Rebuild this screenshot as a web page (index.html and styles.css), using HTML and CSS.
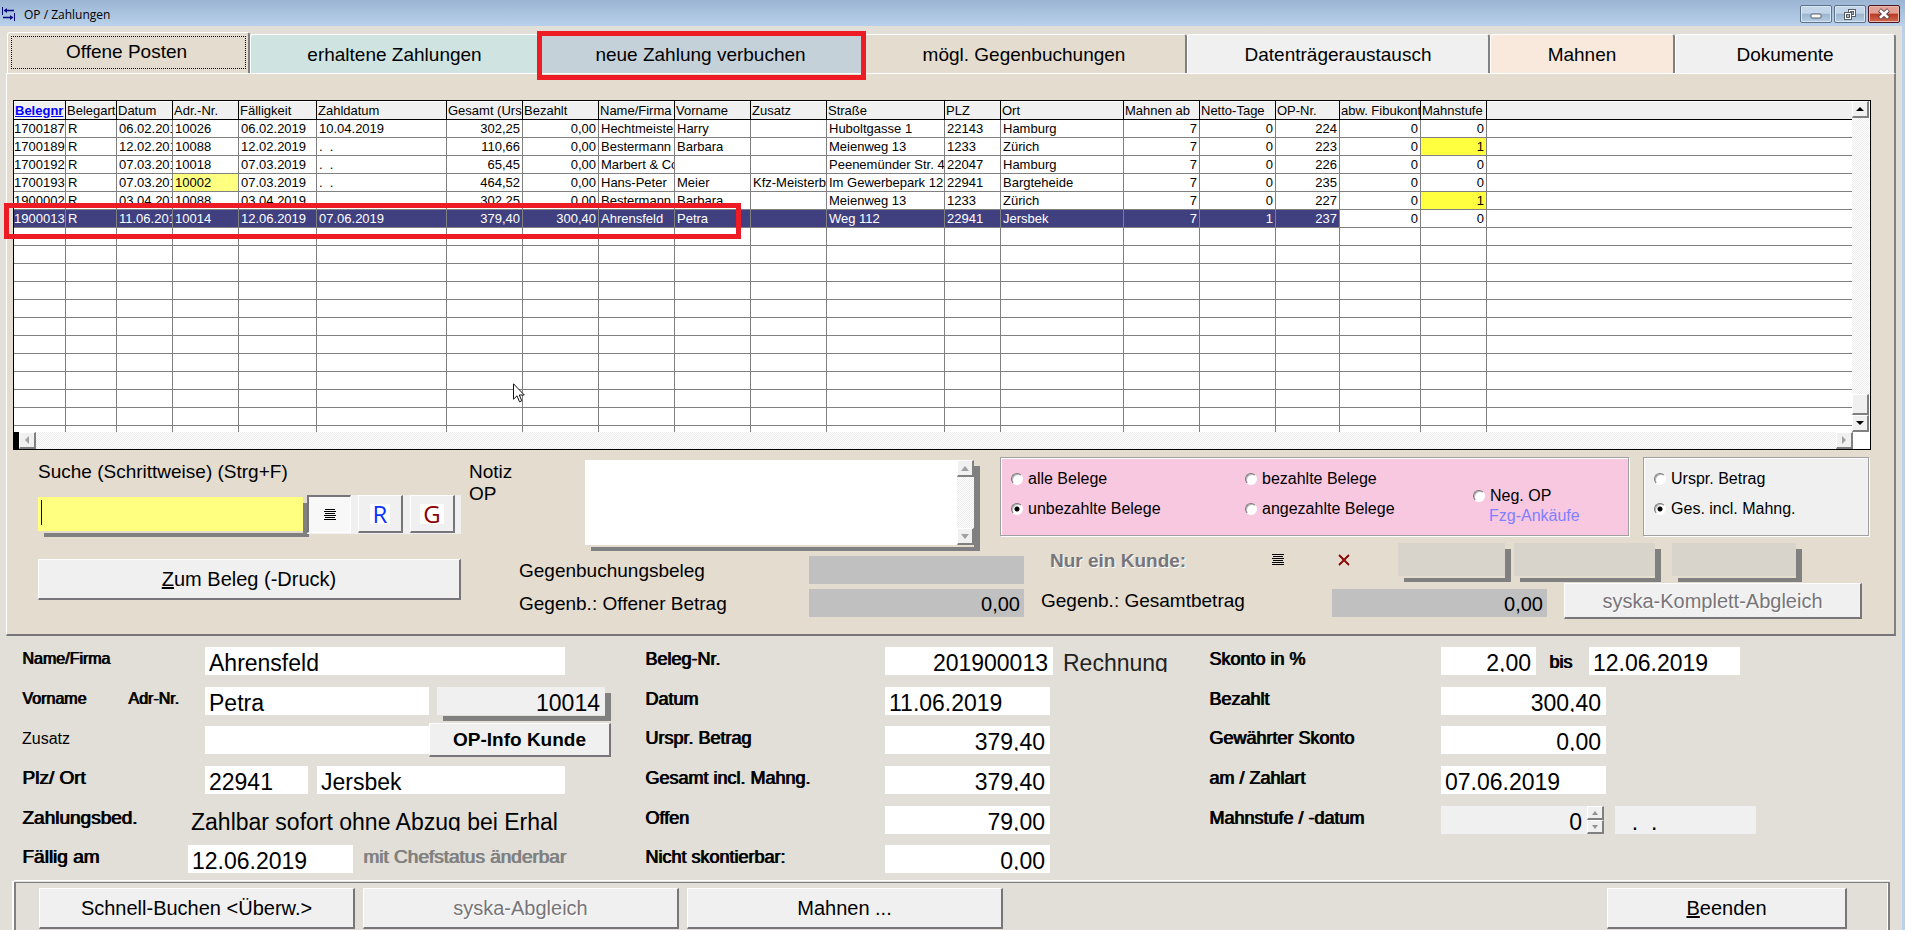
FILE: index.html
```html
<!DOCTYPE html>
<html lang="de">
<head>
<meta charset="utf-8">
<title>OP / Zahlungen</title>
<link rel="stylesheet" href="styles.css">
</head>
<body class="window">
<header class="titlebar">
  <svg class="app-icon" width="13" height="14" viewBox="0 0 13 14" fill="none" stroke="#0a0a80"><path d="M.5 0v8M12.500 6v8" stroke-width="1"/><path d="M2 3.500h10M1 10.500h10" stroke-width="1.500"/><path d="M5 1v5L2 3.500zM8 8v5l3-2.500z" fill="#0a0a80" stroke="none"/></svg>
  <h1 class="title">OP / Zahlungen</h1>
  <div class="win-buttons">
    <button class="win-btn" aria-label="Minimieren"><svg width="12" height="12" viewBox="0 0 12 12"><rect x="1" y="6" width="10" height="4" rx="1" fill="#fff" stroke="#555c68"/></svg></button>
    <button class="win-btn" aria-label="Wiederherstellen"><svg width="14" height="13" viewBox="0 0 14 13" fill="#fff" stroke="#555c68"><rect x="5.500" y="1.500" width="7" height="7"/><rect x="7.500" y="3.500" width="3" height="3" fill="#9db5d0"/><rect x="1.500" y="4.500" width="7" height="7"/><rect x="3.500" y="6.500" width="3" height="3" fill="#9db5d0"/></svg></button>
    <button class="win-btn win-close" aria-label="Schließen"><svg width="14" height="12" viewBox="0 0 14 12"><path d="M2.500 2l9 8M11.500 2l-9 8" stroke="#5a4046" stroke-width="4.400"/><path d="M3 2.300l8 7.400M11 2.300L3 9.700" stroke="#fff" stroke-width="2.600"/></svg></button>
  </div>
</header>

<main class="client">
  <nav class="tabs">
    <button class="tab tab-active">Offene Posten</button>
    <button class="tab tab-teal">erhaltene Zahlungen</button>
    <button class="tab tab-blue">neue Zahlung verbuchen<span class="marker marker-tab"></span></button>
    <button class="tab tab-sand">mögl. Gegenbuchungen</button>
    <button class="tab">Datenträgeraustausch</button>
    <button class="tab tab-peach">Mahnen</button>
    <button class="tab tab-last">Dokumente</button>
  </nav>

  <section class="page">
    <div class="grid">
      <div class="grid-main">
        <div class="grid-view">
          <table class="posten">
            <colgroup><col class="w52"><col class="w51"><col class="w56"><col class="w66"><col class="w78"><col class="w130"><col class="w76"><col class="w76"><col class="w76"><col class="w76"><col class="w76"><col class="w118"><col class="w56"><col class="w123"><col class="w76"><col class="w76"><col class="w64"><col class="w81"><col class="w66"><col></colgroup>
            <thead><tr><th class="sorted">Belegnr<th>Belegart<th>Datum<th>Adr.-Nr.<th>Fälligkeit<th>Zahldatum<th>Gesamt (Urs<th>Bezahlt<th>Name/Firma<th>Vorname<th>Zusatz<th>Straße<th>PLZ<th>Ort<th>Mahnen ab<th>Netto-Tage<th>OP-Nr.<th>abw. Fibukont<th>Mahnstufe<th></tr></thead>
            <tbody>
            <tr><td>1700187<td>R<td>06.02.2019<td>10026<td>06.02.2019<td>10.04.2019<td class="n">302,25<td class="n">0,00<td>Hechtmeister<td>Harry<td><td>Huboltgasse 1<td>22143<td>Hamburg<td class="n">7<td class="n">0<td class="n">224<td class="n">0<td class="n">0<td></tr>
            <tr><td>1700189<td>R<td>12.02.2019<td>10088<td>12.02.2019<td>.  .<td class="n">110,66<td class="n">0,00<td>Bestermann<td>Barbara<td><td>Meienweg 13<td>1233<td>Zürich<td class="n">7<td class="n">0<td class="n">223<td class="n">0<td class="n due">1<td></tr>
            <tr><td>1700192<td>R<td>07.03.2019<td>10018<td>07.03.2019<td>.  .<td class="n">65,45<td class="n">0,00<td>Marbert &amp; Co<td><td><td>Peenemünder Str. 4<td>22047<td>Hamburg<td class="n">7<td class="n">0<td class="n">226<td class="n">0<td class="n">0<td></tr>
            <tr><td>1700193<td>R<td>07.03.2019<td class="flag">10002<td>07.03.2019<td>.  .<td class="n">464,52<td class="n">0,00<td>Hans-Peter<td>Meier<td>Kfz-Meisterbetrieb<td>Im Gewerbepark 12<td>22941<td>Bargteheide<td class="n">7<td class="n">0<td class="n">235<td class="n">0<td class="n">0<td></tr>
            <tr><td>1900002<td>R<td>03.04.2019<td>10088<td>03.04.2019<td><td class="n">302,25<td class="n">0,00<td>Bestermann<td>Barbara<td><td>Meienweg 13<td>1233<td>Zürich<td class="n">7<td class="n">0<td class="n">227<td class="n">0<td class="n due">1<td></tr>
            <tr class="selected"><td>1900013<td>R<td>11.06.2019<td>10014<td>12.06.2019<td>07.06.2019<td class="n">379,40<td class="n">300,40<td>Ahrensfeld<td>Petra<td><td>Weg 112<td>22941<td>Jersbek<td class="n">7<td class="n">1<td class="n">237<td class="n">0<td class="n">0<td></tr>
            <tr><td><td><td><td><td><td><td><td><td><td><td><td><td><td><td><td><td><td><td><td></tr>
            <tr><td><td><td><td><td><td><td><td><td><td><td><td><td><td><td><td><td><td><td><td></tr>
            <tr><td><td><td><td><td><td><td><td><td><td><td><td><td><td><td><td><td><td><td><td></tr>
            <tr><td><td><td><td><td><td><td><td><td><td><td><td><td><td><td><td><td><td><td><td></tr>
            <tr><td><td><td><td><td><td><td><td><td><td><td><td><td><td><td><td><td><td><td><td></tr>
            <tr><td><td><td><td><td><td><td><td><td><td><td><td><td><td><td><td><td><td><td><td></tr>
            <tr><td><td><td><td><td><td><td><td><td><td><td><td><td><td><td><td><td><td><td><td></tr>
            <tr><td><td><td><td><td><td><td><td><td><td><td><td><td><td><td><td><td><td><td><td></tr>
            <tr><td><td><td><td><td><td><td><td><td><td><td><td><td><td><td><td><td><td><td><td></tr>
            <tr><td><td><td><td><td><td><td><td><td><td><td><td><td><td><td><td><td><td><td><td></tr>
            <tr><td><td><td><td><td><td><td><td><td><td><td><td><td><td><td><td><td><td><td><td></tr>
            <tr><td><td><td><td><td><td><td><td><td><td><td><td><td><td><td><td><td><td><td><td></tr>
            </tbody>
          </table>
        </div>
        <div class="vscroll">
          <button class="sb-btn" aria-label="Nach oben"><svg width="8" height="4" viewBox="0 0 8 4"><path d="M4 0l4 4H0z"/></svg></button>
          <span class="sb-space"></span>
          <span class="sb-thumb"></span>
          <button class="sb-btn" aria-label="Nach unten"><svg width="8" height="4" viewBox="0 0 8 4"><path d="M4 4l4-4H0z"/></svg></button>
        </div>
      </div>
      <div class="hscroll">
        <button class="sb-btn" aria-label="Nach links"><svg width="4" height="8" viewBox="0 0 4 8" fill="#a0a0a0"><path d="M0 4l4-4v8z"/></svg></button>
        <span class="sb-space"></span>
        <button class="sb-btn" aria-label="Nach rechts"><svg width="4" height="8" viewBox="0 0 4 8" fill="#a0a0a0"><path d="M4 4L0 0v8z"/></svg></button>
      </div>
      <span class="marker marker-row"></span>
      <svg class="cursor" width="13" height="20" viewBox="0 0 13 20"><path d="M.5.8v15.400l3.500-3.400 2.500 6 2.300-1-2.500-5.800h5z" fill="#fff" stroke="#111"/></svg>
    </div>

    <div class="lower">
      <div class="search">
        <label class="search-label" for="suche">Suche (Schrittweise) (Strg+F)</label>
        <div class="search-row">
          <div class="search-box drop"><input id="suche" class="search-input" type="text"><span class="caret"></span></div>
          <div class="tools">
            <button class="tool tool-down" aria-label="Liste"><svg width="12" height="12" viewBox="0 0 12 12" stroke="#000"><path d="M1 .5h10M0 2.500h12M1 4.500h10M0 6.500h12M1 8.500h10M0 10.500h12"/></svg></button>
            <button class="tool"><span class="letter letter-r">R</span></button>
            <button class="tool"><span class="letter letter-g">G</span></button>
          </div>
        </div>
        <button class="btn btn-beleg"><u>Z</u>um Beleg (-Druck)</button>
      </div>

      <div class="details">
        <div class="top-row">
          <label class="notiz-label" for="notiz">Notiz<br>OP</label>
          <div class="notiz drop">
            <textarea id="notiz" class="notiz-text"></textarea>
            <div class="notiz-scroll">
              <button class="sb-btn" aria-label="Notiz nach oben"><svg width="8" height="5" viewBox="0 0 8 5" fill="#a0a0a0"><path d="M4 0l4 5H0z"/></svg></button>
              <span class="sb-space"></span>
              <button class="sb-btn" aria-label="Notiz nach unten"><svg width="8" height="5" viewBox="0 0 8 5" fill="#a0a0a0"><path d="M4 5l4-5H0z"/></svg></button>
            </div>
          </div>
          <fieldset class="panel panel-pink">
            <div class="radios radios-a">
              <label class="radio"><input type="radio" name="beleg">alle Belege</label>
              <label class="radio"><input type="radio" name="beleg" checked>unbezahlte Belege</label>
            </div>
            <div class="radios radios-b">
              <label class="radio"><input type="radio" name="beleg">bezahlte Belege</label>
              <label class="radio"><input type="radio" name="beleg">angezahlte Belege</label>
            </div>
            <div class="radios radios-c">
              <label class="radio"><input type="radio" name="beleg">Neg. OP</label>
              <span class="ankauf">Fzg-Ankäufe</span>
            </div>
          </fieldset>
          <fieldset class="panel panel-plain">
            <div class="radios">
              <label class="radio"><input type="radio" name="betrag">Urspr. Betrag</label>
              <label class="radio"><input type="radio" name="betrag" checked>Ges. incl. Mahng.</label>
            </div>
          </fieldset>
        </div>

        <div class="bottom-row">
          <div class="gegen">
            <label for="gb">Gegenbuchungsbeleg</label><input id="gb" class="sum" readonly>
            <label for="go">Gegenb.: Offener Betrag</label><input id="go" class="sum" value="0,00" readonly>
          </div>
          <div class="kunde">
            <div class="kunde-row">
              <span class="kunde-label">Nur ein Kunde:</span>
              <button class="icon-btn" aria-label="Kundenliste"><svg width="12" height="12" viewBox="0 0 12 12" stroke="#000"><path d="M0 .5h12M1 2.500h10M0 4.500h12M1 6.500h10M0 8.500h12M0 10.500h12"/></svg></button>
              <button class="icon-btn" aria-label="Kunde entfernen"><svg width="12" height="12" viewBox="0 0 12 12"><path d="M1 1l10 10M11 1L1 11" stroke="#8b0000" stroke-width="1.800"/></svg></button>
              <input class="off drop off-a" aria-label="Kundennummer" disabled>
              <input class="off drop off-b" aria-label="Kundenname" disabled>
              <input class="off drop off-c" aria-label="Kundenort" disabled>
            </div>
            <div class="gesamt-row">
              <label class="gesamt-label" for="gg">Gegenb.: Gesamtbetrag</label><input id="gg" class="sum" value="0,00" readonly>
              <button class="btn btn-komplett" disabled>syska-Komplett-Abgleich</button>
            </div>
          </div>
        </div>
      </div>
    </div>
  </section>

  <form class="form">
    <div class="block block-a">
      <label class="lb small" for="f1">Name/Firma</label><div class="line"><input id="f1" class="f wide" value="Ahrensfeld"></div>
      <div class="pair"><label class="lb small" for="f2">Vorname</label><label class="lb small" for="f3">Adr-Nr.</label></div><div class="line"><input id="f2" class="f vor" value="Petra"><input id="f3" class="f adr drop n" value="10014" readonly></div>
      <label class="lb small thin" for="f4">Zusatz</label><div class="line"><input id="f4" class="f vor zusatz"><button type="button" class="btn btn-info">OP-Info Kunde</button></div>
      <label class="lb" for="f5">Plz/ Ort</label><div class="line"><input id="f5" class="f plz" value="22941"><input class="f ort" aria-label="Ort" value="Jersbek"></div>
      <span class="lb">Zahlungsbed.</span><div class="line out"><span class="plain bed">Zahlbar sofort ohne Abzug bei Erhal</span></div>
      <label class="lb" for="f6">Fällig am</label><div class="line out"><input id="f6" class="f date" value="12.06.2019"><span class="lb gray">mit Chefstatus änderbar</span></div>
    </div>
    <div class="block block-b">
      <label class="lb" for="g1">Beleg-Nr.</label><div class="line"><input id="g1" class="f nr n" value="201900013"><span class="plain art">Rechnung</span></div>
      <label class="lb" for="g2">Datum</label><div class="line"><input id="g2" class="f date" value="11.06.2019"></div>
      <label class="lb" for="g3">Urspr. Betrag</label><div class="line"><input id="g3" class="f date n" value="379,40"></div>
      <label class="lb" for="g4">Gesamt incl. Mahng.</label><div class="line"><input id="g4" class="f date n" value="379,40"></div>
      <label class="lb" for="g5">Offen</label><div class="line"><input id="g5" class="f date n" value="79,00"></div>
      <label class="lb" for="g6">Nicht skontierbar:</label><div class="line"><input id="g6" class="f date n" value="0,00"></div>
    </div>
    <div class="block block-c">
      <label class="lb" for="h1">Skonto in %</label><div class="line"><input id="h1" class="f pct n" value="2,00"><label class="lb bis" for="h2">bis</label><input id="h2" class="f bisdate" value="12.06.2019"></div>
      <label class="lb" for="h3">Bezahlt</label><div class="line"><input id="h3" class="f date n" value="300,40"></div>
      <label class="lb" for="h4">Gewährter Skonto</label><div class="line"><input id="h4" class="f date n" value="0,00"></div>
      <label class="lb" for="h5">am / Zahlart</label><div class="line"><input id="h5" class="f date" value="07.06.2019"></div>
      <label class="lb" for="h6">Mahnstufe / -datum</label><div class="line"><input id="h6" class="f stufe ro n" value="0" readonly><span class="spin"><button type="button" class="spin-btn" aria-label="Erhöhen"><svg width="6" height="4" viewBox="0 0 6 4" fill="#909090"><path d="M3 0l3 4H0z"/></svg></button><button type="button" class="spin-btn" aria-label="Verringern"><svg width="6" height="4" viewBox="0 0 6 4" fill="#909090"><path d="M3 4l3-4H0z"/></svg></button></span><input class="f mdate ro" aria-label="Mahndatum" value="  .  ." readonly></div>
    </div>
  </form>

  <footer class="actions">
    <button class="btn act">Schnell-Buchen &lt;Überw.&gt;</button>
    <button class="btn act" disabled>syska-Abgleich</button>
    <button class="btn act">Mahnen ...</button>
    <button class="btn act act-end"><u>B</u>eenden</button>
  </footer>
</main>
</body>
</html>
```
FILE: styles.css
```css
* { box-sizing: border-box; }

.window {
  margin: 0;
  height: 100vh;
  overflow: hidden;
  display: flex;
  flex-direction: column;
  background: #e2dfd8;
  color: #000;
  font: 19px/22px "Liberation Sans", Arial, sans-serif;
}

button, input, textarea { font: inherit; color: inherit; margin: 0; border-radius: 0; }
input, textarea { border: 0; outline: 0; }

/* title bar */
.titlebar {
  flex: none;
  display: flex;
  align-items: center;
  height: 26px;
  padding: 2px 5px 0 2px;
  background: linear-gradient(#9ab4d2, #b9d1ea);
}
.title { flex: 1; margin: 0 0 0 9px; padding-top: 2px; font: 12px/16px "Open Sans", "Noto Sans", sans-serif; }
.win-buttons { display: flex; gap: 2px; }
.win-btn {
  display: flex;
  align-items: center;
  justify-content: center;
  width: 32px;
  height: 18px;
  padding: 0;
  border: 1px solid #5f7288;
  border-radius: 2px;
  background: linear-gradient(#c3d5e8 45%, #9cb4cf 50%, #b6cce4);
  box-shadow: inset 0 0 0 1px #d8e5f2;
}
.win-close {
  border-color: #4b1620;
  background: linear-gradient(#e3a196 45%, #b93a22 50%, #cf6a50);
  box-shadow: inset 0 0 0 1px #eab8ae;
}

.client {
  flex: 1;
  display: flex;
  flex-direction: column;
  padding: 6px 0 0;
  border-right: 3px solid #b9d1ea;
}

/* tabs */
.tabs {
  display: grid;
  grid-template-columns: 243fr 288fr 324fr 325fr 303fr 185fr 221fr;
  margin: 0 6px 0 7px;
  height: 41px;
}
.tab {
  position: relative;
  margin-top: 2px;
  padding: 2px 0 0;
  border: solid #fff;
  border-width: 1px 2px 0 1px;
  border-right-color: #808080;
  border-radius: 3px 3px 0 0;
  background: #f0f0f0;
}
.tab-active {
  margin-top: 0;
  padding: 0 3px 2px 0;
  background: #e3dccf;
  outline: 1px dotted #000;
  outline-offset: -5px;
}
.tab-teal { background: #cfe3e1; border-right: 0; }
.tab-blue { background: #c5d1d8; border-right: 0; }
.tab-sand { background: #e3dccf; }
.tab-peach { background: #f8e9dc; }

.marker { position: absolute; border: 5px solid #ed1c24; pointer-events: none; z-index: 2; }
.marker-tab { inset: -4px -4px -7px -2px; }
.marker-row { left: -10px; top: 102px; width: 737px; height: 36px; }

/* page */
.page {
  margin: 0 6px;
  padding: 26px 23px 15px 6px;
  border: solid #fff;
  border-width: 1px 2px 2px 1px;
  border-right-color: #808080;
  border-bottom-color: #77757a;
  background: #e3dccf;
}

.grid { position: relative; border: 1px solid #000; background: #fff; }
.grid-main { display: flex; height: 331px; }
.grid-view { flex: 1; min-width: 0; overflow: hidden; background: #fff; }
.cursor { position: absolute; left: 499px; top: 282px; }

.posten {
  width: 100%;
  table-layout: fixed;
  border-collapse: separate;
  border-spacing: 0;
  font-size: 13px;
  line-height: 17px;
}
.posten th, .posten td {
  height: 18px;
  padding: 0 2px;
  overflow: hidden;
  white-space: pre;
  text-align: left;
  font-weight: 400;
  border: solid #808080;
  border-width: 0 1px 1px 0;
}
.posten th { height: 19px; padding: 0 1px; background: #f0f0f0; border-color: #000; box-shadow: inset 0 1px #fff; }
.posten td:first-child { padding: 0; }
.posten th:last-child, .posten td:last-child { border-right: 0; }
.posten .sorted { color: #0000ff; font-weight: 700; text-decoration: underline; }
.posten .n { text-align: right; }
.posten .flag { background: #ffff80; }
.posten .due { background: #ffff40; }
.selected td:nth-child(-n+17) { background: #404080; color: #fff; }
.w51 { width: 51px; } .w52 { width: 52px; } .w56 { width: 56px; }
.w64 { width: 64px; } .w66 { width: 66px; } .w76 { width: 76px; } .w78 { width: 78px; }
.w81 { width: 81px; } .w118 { width: 118px; } .w123 { width: 123px; } .w130 { width: 130px; }

.vscroll, .hscroll, .notiz-scroll {
  display: flex;
  background: repeating-conic-gradient(#ececec 0 25%, #fff 0 50%) 0 0 / 2px 2px;
}
.vscroll { flex-direction: column; width: 17px; margin-right: 1px; }
.hscroll { height: 17px; border-left: 5px solid #000; margin-right: 17px; }
.sb-space { flex: 1; }
.sb-btn, .sb-thumb, .spin-btn {
  display: flex;
  align-items: center;
  justify-content: center;
  flex: none;
  width: 17px;
  height: 17px;
  padding: 0;
  background: #f0f0f0;
  border: solid #fff;
  border-width: 1px 2px 2px 1px;
  border-right-color: #808080;
  border-bottom-color: #808080;
}
.sb-thumb { height: 21px; }

/* area below the list */
.lower { display: grid; grid-template-columns: 423px 1fr; gap: 8px; margin: 7px 2px 0 25px; }
.drop { box-shadow: 0 2px #e3dccf, 6px 6px #808080; }

.search-label { display: block; line-height: 30px; }
.search-row { display: flex; gap: 4px; align-items: flex-start; margin-top: 8px; }
.search-box { position: relative; width: 265px; height: 34px; margin-top: 2px; }
.search-input { display: block; width: 100%; height: 100%; padding: 0 4px; background: #ffff80; }
.caret { position: absolute; left: 3px; top: 3px; width: 1px; height: 25px; background: #000080; }
.tools { position: relative; flex: 1; display: flex; gap: 7px; height: 39px; background: #f0f0f0; }
.tool {
  flex: none;
  width: 45px;
  height: 38px;
  display: flex;
  align-items: center;
  justify-content: center;
  padding: 0;
  background: #f0f0f0;
  border: solid #fff;
  border-width: 1px 2px 2px 1px;
  border-right-color: #77757a;
  border-bottom-color: #77757a;
}
.tool-down { width: 44px; background: #f8f8f8; border-width: 2px 1px 1px 2px; border-color: #77757a #fff #fff #77757a; }
.letter { padding: 0 3px; background: #fff; font: 24px/20px "Open Sans", "Noto Sans", sans-serif; }
.letter-r { color: #0a32ff; }
.letter-g { color: #8b0000; }

.btn {
  padding: 0;
  background: #f0f0f0;
  border: solid #fff;
  border-width: 1px 2px 2px 1px;
  border-right-color: #77757a;
  border-bottom-color: #77757a;
  font-size: 20px;
}
.btn:disabled { color: #77757a; text-shadow: 1px 1px #fff; }
.btn-beleg { display: block; width: 100%; height: 41px; margin-top: 25px; }

.details { min-width: 0; }
.top-row { display: flex; align-items: flex-start; height: 86px; }
.notiz-label { flex: none; width: 116px; padding-top: 4px; }
.notiz { flex: none; display: flex; width: 389px; height: 85px; margin-top: 3px; }
.notiz-text { flex: 1; display: block; resize: none; background: #fff; padding: 4px; }
.notiz-scroll { flex-direction: column; width: 17px; }
.panel {
  display: flex;
  height: 79px;
  margin: 0;
  min-width: 0;
  padding: 0;
  border: 1px solid #a0a0a0;
  box-shadow: inset 1px 1px #fff, 1px 1px #fff;
  font-size: 16px;
}
.panel-pink { flex: 630; margin-left: 26px; background: #f8c8e0; }
.panel-plain { flex: 225; margin-left: 14px; background: #f0f0f0; }
.radios { display: flex; flex-direction: column; gap: 8px; padding: 10px 0 0 10px; white-space: nowrap; }
.radios-a, .radios-b { flex: none; width: 234px; }
.radios-b { width: 228px; }
.radios-c { gap: 0; padding-top: 28px; }
.radios-c .radio { line-height: 20px; }
.radio { display: flex; align-items: center; gap: 5px; }
.radio input {
  appearance: none;
  width: 12px;
  height: 12px;
  border-radius: 50%;
  border: 1px solid;
  border-color: #777 #fff #fff #777;
  background: #fff;
  box-shadow: inset 1px 1px #b5b5b5;
}
.radio input:checked { background: radial-gradient(circle, #000 2px, #fff 3px); }
.ankauf { padding-left: 16px; line-height: 20px; color: #8080ff; }

.bottom-row { display: flex; }
.gegen {
  flex: none;
  display: grid;
  grid-template-columns: 290px 215px;
  grid-auto-rows: 28px;
  row-gap: 5px;
  align-items: center;
  padding: 13px 0 0 50px;
}
.gegen label { padding-top: 2px; }
.sum { width: 215px; height: 28px; padding: 2px 4px 0; text-align: right; font-size: 20px; background: #c0c0c0; }
.kunde { flex: 1; min-width: 0; margin-left: 17px; }
.kunde-row { display: flex; align-items: center; height: 33px; padding-left: 9px; }
.kunde-label { flex: none; width: 206px; padding-top: 3px; font-weight: 700; color: #77757a; text-shadow: 1px 1px #fff; }
.icon-btn { flex: none; width: 44px; height: 28px; margin-right: 22px; padding: 0; border: 0; background: none; }
.off { flex: none; height: 33px; background: #d8d3cb; }
.off-a { width: 107px; margin-left: 10px; }
.off-b { width: 141px; margin-left: 9px; }
.off-c { width: 124px; margin-left: 17px; }
.gesamt-row { display: flex; align-items: flex-start; margin-top: 7px; }
.gesamt-label { flex: none; width: 291px; line-height: 36px; }
.gesamt-row .sum { margin-top: 6px; }
.btn-komplett { flex: none; width: 298px; height: 36px; margin-left: 17px; }

/* record form */
.form { display: grid; grid-template-columns: 623fr 564fr 693fr; margin: 0; padding: 11px 0 0 22px; }
.block { display: grid; grid-template-rows: 40px 39px 40px 40px 39px 28px; align-content: start; }
.block-a { grid-template-columns: 183px 1fr; }
.block-b { grid-template-columns: 240px 1fr; }
.block-c { grid-template-columns: 232px 1fr; }
.line { display: flex; align-items: flex-start; height: 28px; min-width: 0; }
.out { margin-left: -17px; }
.pair { display: flex; gap: 42px; }
.lb { font-size: 18px; line-height: 24px; white-space: nowrap; text-shadow: 1px 0 currentColor; }
.block-a .lb:not(.small) { font-size: 19px; }
.block-a .small { font-size: 16px; text-shadow: 1px 0 currentColor; }
.block-a .thin { line-height: 26px; text-shadow: none; }
.gray { color: #808080; margin-left: 10px; }
.f {
  height: 28px;
  padding: 7px 4px 0;
  border-bottom: 3px solid #fff;
  background: #fff;
  font-size: 23px;
  min-width: 0;
}
.f.n { text-align: right; padding-right: 5px; }
.wide { width: 360px; }
.vor { width: 224px; }
.adr { width: 168px; margin-left: 8px; background: #f0f0f0; border-color: #f0f0f0; box-shadow: 0 1px #e2dfd8, 6px 6px #808080; }
.btn-info { position: relative; width: 182px; height: 34px; margin-top: -3px; font-size: 19px; font-weight: 700; }
.plz { width: 103px; }
.ort { width: 248px; margin-left: 9px; }
.date { width: 165px; }
.nr { width: 168px; }
.plain { height: 25px; overflow: hidden; padding-top: 4px; font-size: 23px; line-height: 24px; white-space: nowrap; }
.bed { margin-left: 3px; }
.art { margin-left: 10px; color: #222; }
.pct { width: 95px; }
.bis { margin: 3px 17px 0 13px; }
.bisdate { width: 151px; }
.ro { background: #f0f0f0; border-color: #f0f0f0; }
.stufe { width: 146px; }
.spin { display: flex; flex-direction: column; width: 17px; }
.spin-btn { height: 14px; }
.mdate { width: 141px; margin-left: 11px; }

/* action bar */
.actions {
  flex: 1;
  display: flex;
  gap: 8px;
  align-items: flex-start;
  margin: 9px 12px -4px 14px;
  padding: 5px 41px 0 23px;
  border: solid #808080;
  border-width: 1px 2px 0;
  box-shadow: inset -1px 0 #fff, 0 -1px #e2dfd8, 0 -2px #fff, -2px -1px #fff;
}
.act { width: 316px; height: 41px; }
.act-end { width: 240px; margin-left: auto; }
```
